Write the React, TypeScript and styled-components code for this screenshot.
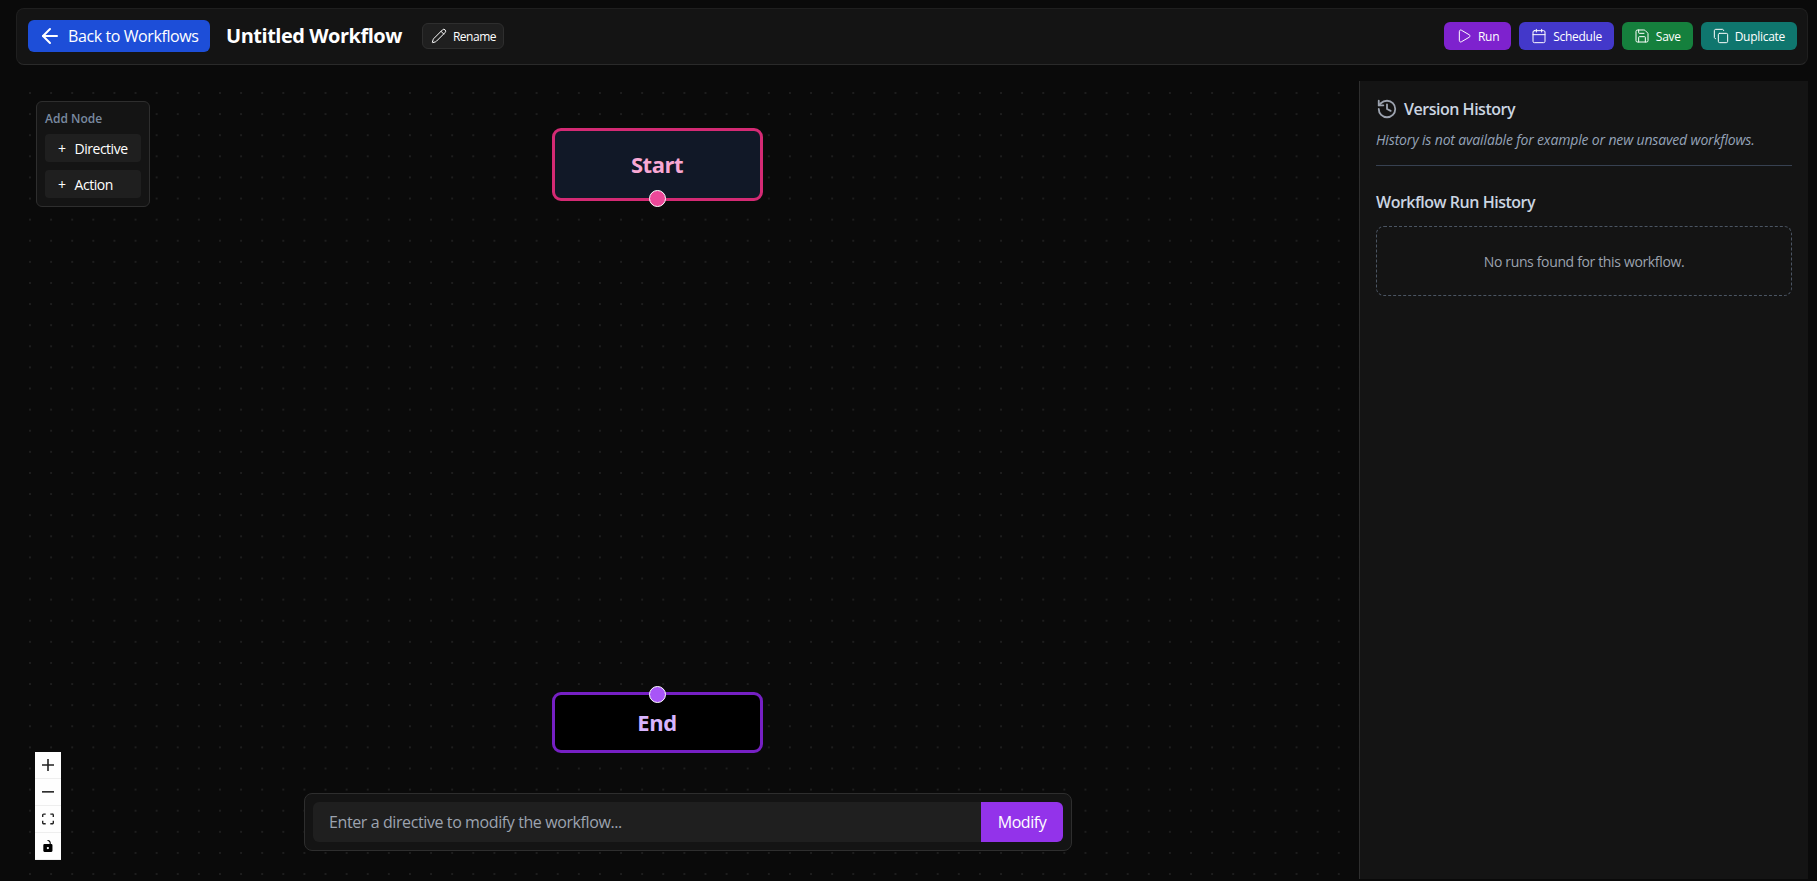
import React from 'react';
import styled, { createGlobalStyle } from 'styled-components';
import { ArrowLeft, Calendar, Copy, History, Pencil, Play, Save } from 'lucide-react';

const GlobalStyle = createGlobalStyle`
  * {
    box-sizing: border-box;
  }

  html,
  body {
    margin: 0;
    height: 100%;
    background: #0a0a0a;
    font-family: 'Open Sans', 'Noto Sans', sans-serif;
    color: #fff;
    overflow: hidden;
    letter-spacing: -0.03em;
  }

  #root {
    height: 100%;
  }
`;

const Page = styled.div`
  display: flex;
  flex-direction: column;
  gap: 16px;
  height: 100%;
  padding: 8px 9px 2px 16px;
`;

const Header = styled.header`
  display: flex;
  align-items: center;
  justify-content: space-between;
  flex-shrink: 0;
  height: 57px;
  padding: 0 10px 1px 11px;
  background: #141414;
  border: 1px solid #1f1f1f;
  border-bottom-color: #2a2a2a;
  border-radius: 8px;
`;

const HeaderGroup = styled.div<{ $gap: number }>`
  display: flex;
  align-items: center;
  gap: ${(p) => p.$gap}px;
`;

const BackButton = styled.button`
  display: flex;
  align-items: center;
  gap: 6px;
  width: 182px;
  height: 32px;
  padding: 0 0 0 10px;
  border: 0;
  border-radius: 6px;
  background: #1d4ed8;
  color: #fff;
  font: inherit;
  font-size: 16px;
  letter-spacing: -0.025em;
  white-space: nowrap;
`;

const Title = styled.h1`
  margin: 0 0 0 16px;
  font-size: 20px;
  font-weight: 700;
  line-height: 28px;
  color: #fff;
`;

const RenameButton = styled.button`
  display: flex;
  align-items: center;
  gap: 6px;
  height: 26px;
  margin-left: 20px;
  padding: 0 7px 0 8px;
  border: 1px solid #2e2e2e;
  border-radius: 6px;
  background: #1f1f1f;
  color: #fff;
  font: inherit;
  font-size: 12px;
  letter-spacing: inherit;
`;

const ActionButton = styled.button<{ $bg: string }>`
  display: flex;
  align-items: center;
  gap: 6px;
  height: 28px;
  padding: 0 12px;
  border: 0;
  border-radius: 6px;
  background: ${(p) => p.$bg};
  color: #fff;
  font: inherit;
  font-size: 12px;
  letter-spacing: -0.024em;
`;

const Workspace = styled.main`
  display: flex;
  flex: 1;
  min-height: 0;
`;

const Canvas = styled.section`
  position: relative;
  flex: 1;
  min-width: 0;
  background-color: #0a0a0a;
  background-image: radial-gradient(circle, #1e1e1e 0.7px, transparent 1.1px);
  background-size: 21.12px 21.12px;
  background-position: 3.44px 1.44px;
`;

const AddNodePanel = styled.div`
  position: absolute;
  left: 20px;
  top: 20px;
  display: flex;
  flex-direction: column;
  gap: 8px;
  width: 114px;
  height: 106px;
  padding: 8px;
  background: #141414;
  border: 1px solid #2e2e2e;
  border-radius: 6px;
`;

const AddNodeTitle = styled.div`
  height: 16px;
  font-size: 12px;
  font-weight: 600;
  line-height: 18px;
  letter-spacing: 0;
  color: #7a8aa0;
`;

const AddNodeButton = styled.button`
  display: flex;
  align-items: center;
  gap: 9px;
  height: 28px;
  padding: 0 0 0 13px;
  border: 0;
  border-radius: 4px;
  background: #1f1f1f;
  color: #fff;
  font: inherit;
  font-size: 14px;
  letter-spacing: inherit;
`;

const FlowNode = styled.div<{ $top: number; $height: number; $bg: string; $border: string; $text: string }>`
  position: absolute;
  left: 535.5px;
  top: ${(p) => p.$top}px;
  display: flex;
  align-items: center;
  justify-content: center;
  width: 211px;
  height: ${(p) => p.$height}px;
  padding-bottom: 2px;
  background: ${(p) => p.$bg};
  border: 3px solid ${(p) => p.$border};
  border-radius: 9px;
  color: ${(p) => p.$text};
  font-size: 22px;
  font-weight: 700;
`;

const Handle = styled.span<{ $side: 'top' | 'bottom'; $fill: string }>`
  position: absolute;
  left: 50%;
  ${(p) => p.$side}: -9px;
  width: 17px;
  height: 17px;
  margin-left: -8.5px;
  background: ${(p) => p.$fill};
  border: 1.5px solid #fff;
  border-radius: 50%;
`;

const ZoomControls = styled.div`
  position: absolute;
  left: 19px;
  bottom: 19px;
  display: flex;
  flex-direction: column;
  width: 26px;
`;

const ZoomButton = styled.button`
  display: flex;
  align-items: center;
  justify-content: center;
  width: 26px;
  height: 27px;
  padding: 0;
  background: #fefefe;
  border: 0;
  border-bottom: 1px solid #eee;

  svg {
    width: 12px;
    height: 12px;
    fill: #222;
  }
`;

const LockIcon = styled.svg`
  && {
    fill: #000;
  }
`;

const DirectiveBar = styled.form`
  position: absolute;
  left: 288px;
  bottom: 28px;
  display: flex;
  width: 768px;
  height: 58px;
  padding: 8px;
  background: #141414;
  border: 1px solid #2e2e2e;
  border-radius: 8px;
`;

const DirectiveInput = styled.input`
  flex: 1;
  min-width: 0;
  padding: 0 16px;
  background: #1f1f1f;
  border: 0;
  border-radius: 6px 0 0 6px;
  outline: 0;
  color: #fff;
  font: inherit;
  font-size: 16px;
  letter-spacing: -0.025em;

  &::placeholder {
    color: #9ca3af;
    opacity: 1;
  }
`;

const ModifyButton = styled.button`
  width: 82px;
  padding: 0;
  background: #9333ea;
  border: 0;
  border-radius: 0 6px 6px 0;
  color: #fff;
  font: inherit;
  font-size: 16px;
  letter-spacing: inherit;
`;

const SidePanel = styled.aside`
  display: flex;
  flex-direction: column;
  flex-shrink: 0;
  width: 449px;
  padding: 16px;
  background: #141414;
  border-left: 1px solid #2e2e2e;
`;

const PanelHeading = styled.h2`
  display: flex;
  align-items: center;
  gap: 6px;
  margin: 0;
  font-size: 16px;
  font-weight: 600;
  line-height: 24px;
  color: #cbd5e1;

  svg {
    color: #9ca3af;
  }
`;

const PanelNote = styled.p`
  margin: 9px 0 0;
  font-size: 14px;
  font-style: italic;
  line-height: 20px;
  letter-spacing: -0.011em;
  color: #94a3b8;
`;

const Divider = styled.hr`
  width: 100%;
  margin: 15px 0 24px;
  border: 0;
  border-top: 1px solid #374151;
`;

const EmptyRuns = styled.div`
  display: flex;
  align-items: center;
  justify-content: center;
  height: 70px;
  margin-top: 12px;
  border: 1px dashed #4b5563;
  border-radius: 8px;
  font-size: 14px;
  letter-spacing: -0.025em;
  color: #9ca3af;
`;

const actions = [
  { label: 'Run', bg: '#7e22ce', Icon: Play },
  { label: 'Schedule', bg: '#4338ca', Icon: Calendar },
  { label: 'Save', bg: '#15803d', Icon: Save },
  { label: 'Duplicate', bg: '#0f766e', Icon: Copy },
];

export default function App() {
  return (
    <>
      <GlobalStyle />
      <Page>
        <Header>
          <HeaderGroup $gap={0}>
            <BackButton type="button">
              <ArrowLeft size={24} />
              Back to Workflows
            </BackButton>
            <Title>Untitled Workflow</Title>
            <RenameButton type="button">
              <Pencil size={16} strokeWidth={1.5} />
              Rename
            </RenameButton>
          </HeaderGroup>
          <HeaderGroup $gap={8}>
            {actions.map(({ label, bg, Icon }) => (
              <ActionButton key={label} type="button" $bg={bg}>
                <Icon size={16} strokeWidth={1.5} />
                {label}
              </ActionButton>
            ))}
          </HeaderGroup>
        </Header>
        <Workspace>
          <Canvas>
            <AddNodePanel>
              <AddNodeTitle>Add Node</AddNodeTitle>
              <AddNodeButton type="button">
                <span>+</span>
                Directive
              </AddNodeButton>
              <AddNodeButton type="button">
                <span>+</span>
                Action
              </AddNodeButton>
            </AddNodePanel>
            <FlowNode $top={47} $height={73} $bg="#111827" $border="#d42a74" $text="#f9a8d4">
              Start
              <Handle $side="bottom" $fill="#ec4899" />
            </FlowNode>
            <FlowNode $top={611} $height={61} $bg="#000" $border="#7620c4" $text="#d8b4fe">
              End
              <Handle $side="top" $fill="#a855f7" />
            </FlowNode>
            <ZoomControls>
              <ZoomButton type="button">
                <svg viewBox="0 0 32 32">
                  <path d="M32 18.133H18.133V32h-4.266V18.133H0v-4.266h13.867V0h4.266v13.867H32z" />
                </svg>
              </ZoomButton>
              <ZoomButton type="button">
                <svg viewBox="0 0 32 5">
                  <path d="M0 0h32v4.2H0z" />
                </svg>
              </ZoomButton>
              <ZoomButton type="button">
                <svg viewBox="0 0 32 30">
                  <path d="M3.692 4.63c0-.53.4-.938.939-.938h5.215V0H4.708C2.13 0 0 2.054 0 4.63v5.216h3.692V4.631zM27.354 0h-5.2v3.692h5.17c.53 0 .984.4.984.939v5.215H32V4.631A4.624 4.624 0 0027.354 0zm.954 24.83c0 .532-.4.94-.939.94h-5.215v3.768h5.215c2.577 0 4.631-2.13 4.631-4.707v-5.139h-3.692v5.139zm-23.677.94c-.531 0-.939-.4-.939-.94v-5.138H0v5.139c0 2.577 2.13 4.707 4.708 4.707h5.138V25.77H4.631z" />
                </svg>
              </ZoomButton>
              <ZoomButton type="button">
                <LockIcon viewBox="0 0 25 32">
                  <path d="M21.333 10.667H19.81V7.619C19.81 3.429 16.38 0 12.19 0c-4.114 1.828-1.37 2.133.305 2.438 1.676.305 4.42 2.59 4.42 5.181v3.048H3.047A3.056 3.056 0 000 13.714v15.238A3.056 3.056 0 003.048 32h18.285a3.056 3.056 0 003.048-3.048V13.714a3.056 3.056 0 00-3.048-3.047zM12.19 24.533a3.056 3.056 0 01-3.047-3.047 3.056 3.056 0 013.047-3.048 3.056 3.056 0 013.048 3.048 3.056 3.056 0 01-3.048 3.047z" />
                </LockIcon>
              </ZoomButton>
            </ZoomControls>
            <DirectiveBar>
              <DirectiveInput placeholder="Enter a directive to modify the workflow..." />
              <ModifyButton type="button">Modify</ModifyButton>
            </DirectiveBar>
          </Canvas>
          <SidePanel>
            <PanelHeading>
              <History size={22} strokeWidth={2} />
              Version History
            </PanelHeading>
            <PanelNote>History is not available for example or new unsaved workflows.</PanelNote>
            <Divider />
            <PanelHeading>Workflow Run History</PanelHeading>
            <EmptyRuns>No runs found for this workflow.</EmptyRuns>
          </SidePanel>
        </Workspace>
      </Page>
    </>
  );
}
